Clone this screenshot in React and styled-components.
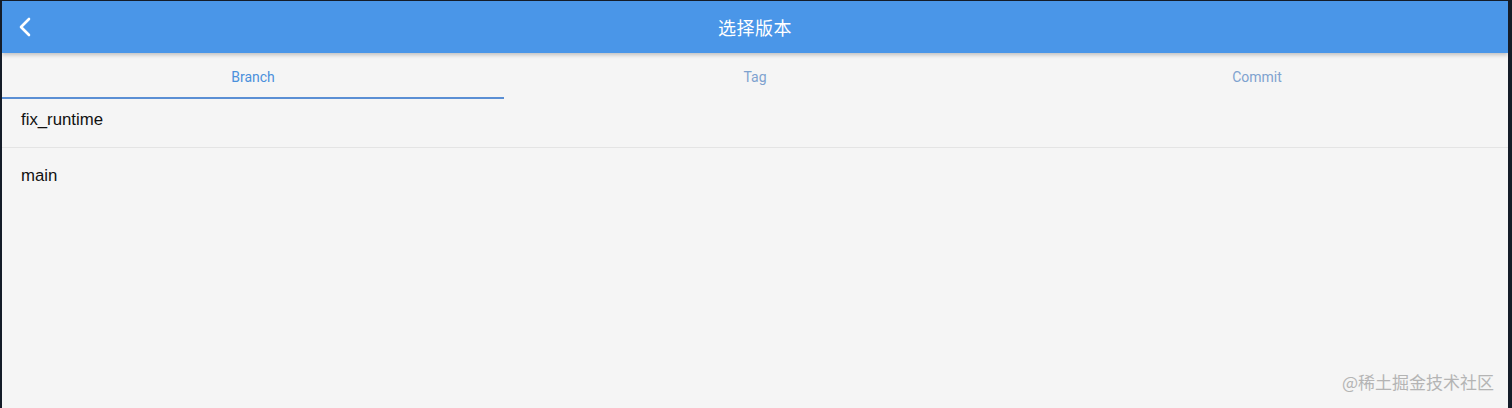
import React, { useState } from 'react';
import styled, { createGlobalStyle } from 'styled-components';

const GlobalStyle = createGlobalStyle`
  html, body {
    margin: 0;
    padding: 0;
    background: #1a2330;
  }
  body {
    font-family: "Noto Sans", "Noto Sans CJK SC", sans-serif;
  }
`;

const tabs = ['Branch', 'Tag', 'Commit'];
const branches = ['fix_runtime', 'main'];

const App = () => {
  const [active, setActive] = useState(0);

  return (
    <>
      <GlobalStyle />
      <Frame>
        <Screen>
          <AppBar>
            <BackButton aria-label="back">
              <svg width="14" height="20" viewBox="0 0 14 20" fill="none">
                <path d="M11 2L3 10l8 8" stroke="#fff" strokeWidth="2.6" strokeLinecap="round" strokeLinejoin="round" />
              </svg>
            </BackButton>
            <Title>选择版本</Title>
          </AppBar>
          <TabBar>
            {tabs.map((t, i) => (
              <Tab key={t} $active={i === active} onClick={() => setActive(i)}>
                {t}
              </Tab>
            ))}
          </TabBar>
          <List>
            {branches.map((b) => (
              <Row key={b}>{b}</Row>
            ))}
          </List>
          <Watermark>@稀土掘金技术社区</Watermark>
        </Screen>
      </Frame>
    </>
  );
};

const Frame = styled.div`
  height: 408px;
  padding: 1px 4px 0 2px;
  box-sizing: border-box;
  background: #141c28;
  display: flex;
`;

const Screen = styled.div`
  position: relative;
  flex: 1;
  background: #f5f5f5;
  display: flex;
  flex-direction: column;
  overflow: hidden;
`;

const AppBar = styled.div`
  position: relative;
  z-index: 1;
  height: 52px;
  background: #4a96e8;
  display: flex;
  align-items: center;
  justify-content: center;
  box-shadow: 0 2px 4px rgba(0, 0, 0, 0.22);
`;

const BackButton = styled.button`
  position: absolute;
  left: 12px;
  top: 50%;
  transform: translateY(-50%);
  background: none;
  border: none;
  padding: 4px;
  display: flex;
  cursor: pointer;
`;

const Title = styled.h1`
  margin: 0;
  color: #fff;
  font-size: 18px;
  font-weight: 400;
  font-family: "Noto Sans CJK SC", sans-serif;
  letter-spacing: 0.5px;
`;

const TabBar = styled.div`
  display: grid;
  grid-template-columns: repeat(3, 1fr);
  height: 46px;
`;

const Tab = styled.div`
  display: flex;
  align-items: center;
  justify-content: center;
  box-sizing: border-box;
  padding-top: 3px;
  font-family: Roboto, "Liberation Sans", sans-serif;
  font-size: 14px;
  font-weight: 400;
  color: ${(p) => (p.$active ? '#4a90dc' : '#7ea2cf')};
  border-bottom: 2px solid ${(p) => (p.$active ? '#5b8fd4' : 'transparent')};
  cursor: pointer;
`;

const List = styled.div`
  display: flex;
  flex-direction: column;
`;

const Row = styled.div`
  box-sizing: border-box;
  height: 49px;
  display: flex;
  align-items: center;
  padding: 0 19px 6px;
  font-family: "Liberation Sans", Arial, sans-serif;
  font-size: 16.8px;
  color: #111;
  border-bottom: 1px solid #e4e4e4;
  &:last-child {
    border-bottom: none;
    height: 56px;
    padding: 0 19px;
  }
`;

const Watermark = styled.div`
  position: absolute;
  right: 14px;
  bottom: 14px;
  font-family: "Noto Sans CJK SC", sans-serif;
  font-size: 17px;
  color: #b4b4b4;
  pointer-events: none;
`;

export default App;
